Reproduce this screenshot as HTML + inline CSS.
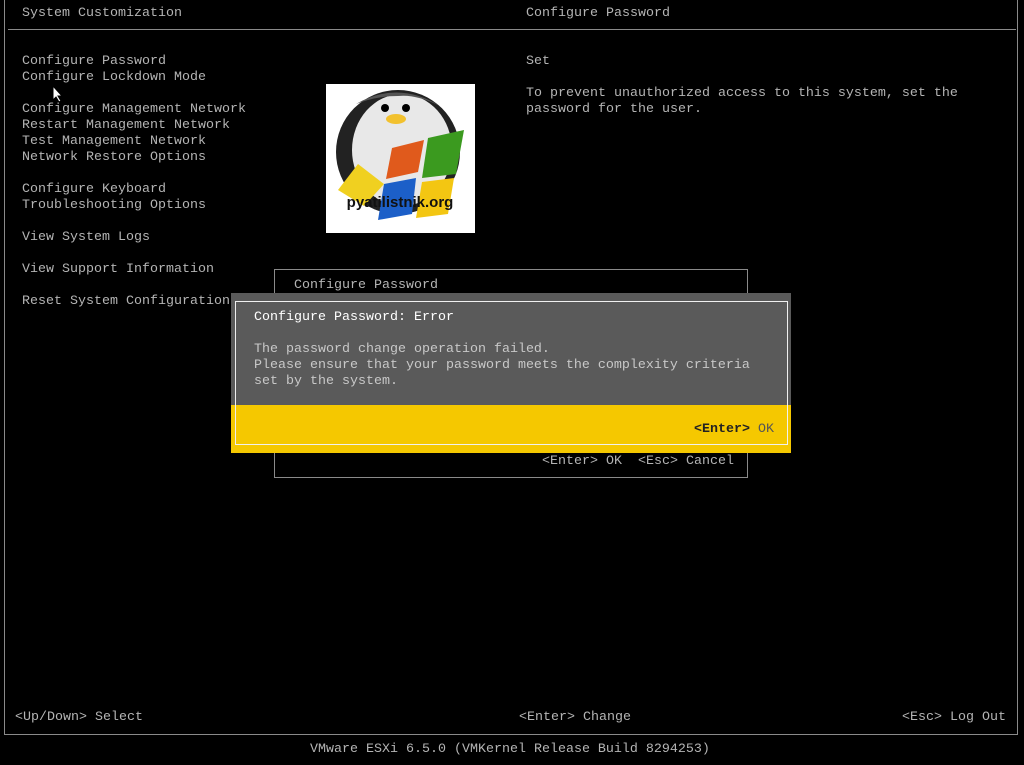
<!DOCTYPE html><html><head><style>
body{margin:0;width:1024px;height:765px;background:#000;overflow:hidden;position:relative;font-family:"Liberation Mono",monospace;font-size:13.33px;color:#b4b4b4}
.t{position:absolute;white-space:pre;line-height:16px}
.b{position:absolute;box-sizing:border-box}
</style></head><body>
<div class="b" style="left:4px;top:-2px;width:1014px;height:737px;border:1px solid #8a8a8a;border-top:none"></div>
<div class="b" style="left:8px;top:29px;width:1008px;height:1px;background:#8a8a8a"></div>
<div class="t" style="left:22px;top:6px">System Customization</div>
<div class="t" style="left:526px;top:6px">Configure Password</div>
<div class="t" style="left:22px;top:54px">Configure Password
Configure Lockdown Mode

Configure Management Network
Restart Management Network
Test Management Network
Network Restore Options

Configure Keyboard
Troubleshooting Options

View System Logs

View Support Information

Reset System Configuration</div>
<div class="t" style="left:526px;top:54px">Set

To prevent unauthorized access to this system, set the
password for the user.</div>
<svg style="position:absolute;left:52px;top:85px" width="12" height="18" viewBox="0 0 12 18"><path d="M1 1 L1 15 L4 12 L7 17 L9 16 L6 11 L10 11 Z" fill="#fff" stroke="#000" stroke-width="1"/></svg>
<div class="b" style="left:326px;top:84px;width:149px;height:149px;background:#fff">
<svg width="149" height="149" viewBox="0 0 149 149">
<ellipse cx="72" cy="68" rx="62" ry="62" fill="#222"/>
<ellipse cx="76" cy="66" rx="50" ry="56" fill="#e8e8e8"/>
<path d="M30 20 Q72 -4 114 22 Q90 10 72 12 Q50 12 30 20Z" fill="#555"/>
<circle cx="59" cy="24" r="4" fill="#000"/><circle cx="80" cy="24" r="4" fill="#000"/>
<ellipse cx="70" cy="35" rx="10" ry="5" fill="#f2c12e"/>
<path d="M66 64 L98 56 L92 88 L60 95 Z" fill="#e05a1c"/>
<path d="M102 54 L138 46 L130 90 L96 94 Z" fill="#3b9a1f"/>
<path d="M58 100 L90 94 L86 130 L52 136 Z" fill="#1c5fc8"/>
<path d="M96 98 L128 94 L122 130 L90 134 Z" fill="#f3c612"/>
<path d="M12 106 L32 80 L58 100 L38 122 Z" fill="#f0d020"/>
<text x="74" y="123" text-anchor="middle" font-family="Liberation Sans,sans-serif" font-weight="bold" font-size="15" fill="#111">pyatilistnik.org</text>
</svg></div>
<div class="b" style="left:274px;top:269px;width:474px;height:209px;border:1px solid #8a8a8a"></div>
<div class="t" style="left:294px;top:278px">Configure Password</div>
<div class="t" style="left:542px;top:454px">&lt;Enter&gt; OK  &lt;Esc&gt; Cancel</div>
<div class="b" style="left:231px;top:293px;width:560px;height:160px;background:#5a5a5a"></div>
<div class="b" style="left:231px;top:405px;width:560px;height:48px;background:#f5c800"></div>
<div class="b" style="left:235px;top:301px;width:553px;height:144px;border:1px solid #f0f0f0"></div>
<div class="t" style="left:254px;top:310px;color:#fff">Configure Password: Error</div>
<div class="t" style="left:254px;top:342px;color:#c8c8c8">The password change operation failed.
Please ensure that your password meets the complexity criteria
set by the system.</div>
<div class="t" style="left:694px;top:422px;color:#222"><b>&lt;Enter&gt;</b> <span style="color:#555">OK</span></div>
<div class="t" style="left:15px;top:710px">&lt;Up/Down&gt; Select</div>
<div class="t" style="left:519px;top:710px">&lt;Enter&gt; Change</div>
<div class="t" style="left:902px;top:710px">&lt;Esc&gt; Log Out</div>
<div class="t" style="left:310px;top:742px">VMware ESXi 6.5.0 (VMKernel Release Build 8294253)</div>
</body></html>
